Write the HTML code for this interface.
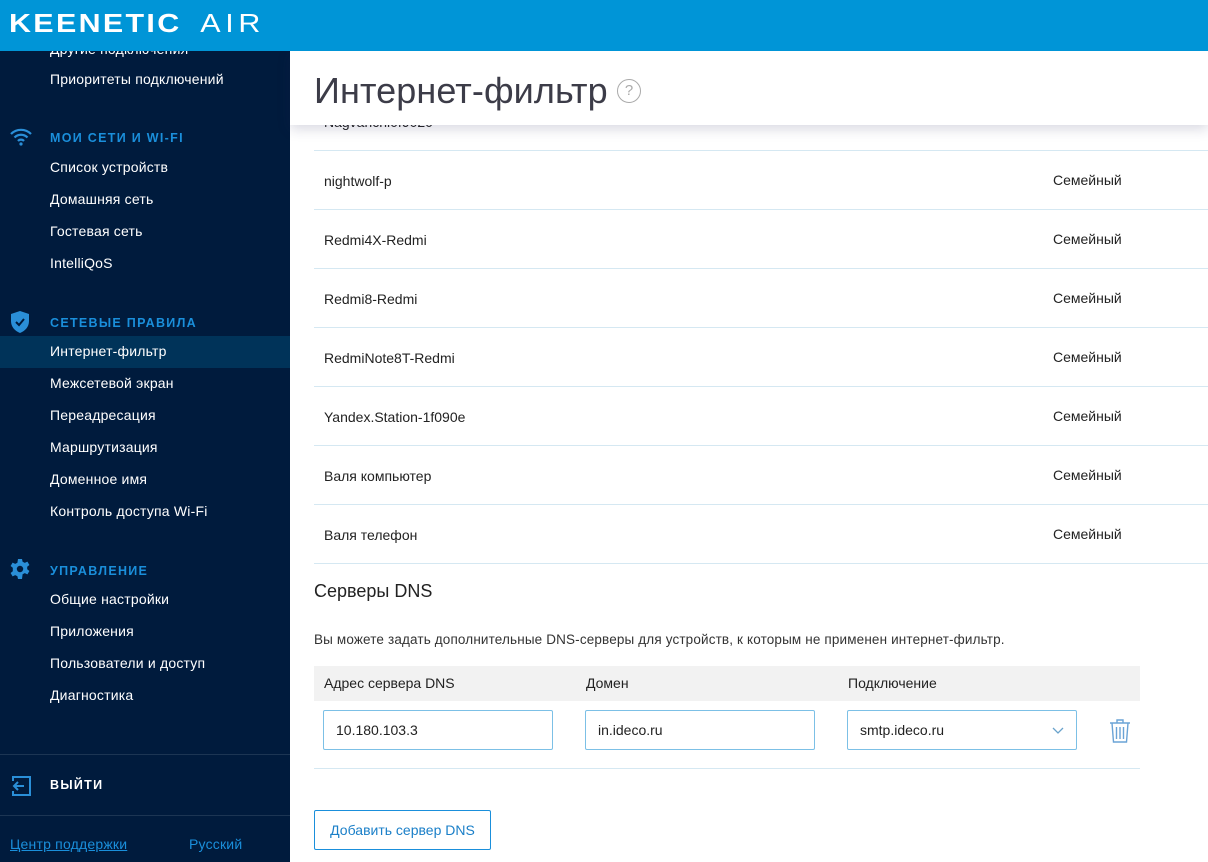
<!DOCTYPE html>
<html><head><meta charset="utf-8"><style>
*{margin:0;padding:0;box-sizing:border-box}
body{width:1208px;height:862px;overflow:hidden;font-family:"Liberation Sans","Noto Sans CJK SC",sans-serif;background:#fff;position:relative;color:#222}
.top{position:absolute;left:0;top:0;width:1208px;height:51px;background:#0095d7;z-index:5}
.logo{position:absolute;left:9px;top:8px;color:#fff;font-size:26px;font-weight:bold;letter-spacing:2px;transform:scaleX(1.17);transform-origin:left}
.logo span{font-weight:normal;letter-spacing:4px;margin-left:16px}
.side{position:absolute;left:0;top:51px;width:290px;height:811px;background:#001b3d;color:#fff;font-size:14px;letter-spacing:0.2px}
.it{position:absolute;left:50px}
.sec{position:absolute;left:50px;color:#1a8fdb;font-weight:bold;font-size:12.5px;letter-spacing:1.3px}
.act{position:absolute;left:0;top:285px;width:290px;height:32px;background:#003359}
.ic{position:absolute;left:10px}
.hdr{position:absolute;left:290px;top:51px;width:918px;height:74px;background:#fff;z-index:3;box-shadow:0 4px 12px rgba(40,40,90,.18)}
.hdr h1{position:absolute;left:24px;top:19px;font-weight:normal;font-size:36px;color:#3c3c48;letter-spacing:0.1px}
.q{position:absolute;left:327px;top:28px;width:24px;height:24px;border:1.5px solid #aaa;border-radius:50%;color:#aaa;font-size:15px;text-align:center;line-height:21px}
.row{position:absolute;left:314px;width:894px;height:59px;border-bottom:1px solid #d5e8f2;font-size:14px}
.row .n{position:absolute;left:10px;top:22px}
.row .v{position:absolute;left:739px;top:21px}
.inp{position:absolute;top:710px;height:40px;border:1px solid #7cc0e6;border-radius:2px;font-size:14px;padding:11px 12px}
</style></head><body>
<div class="top"><div class="logo">KEENETIC<span>AIR</span></div></div>
<div class="side">
<div class="it" style="top:-10px">Другие подключения</div>
<div class="it" style="top:20px">Приоритеты подключений</div>
<svg class="ic" style="top:77px" width="22" height="18" viewBox="0 0 22 18"><path d="M1 6a14 14 0 0 1 20 0M4.5 9.5a9 9 0 0 1 13 0M8 13a4 4 0 0 1 6 0" stroke="#2a8fd8" stroke-width="2.2" fill="none"/><circle cx="11" cy="16" r="1.6" fill="#2a8fd8"/></svg>
<div class="sec" style="top:80px">МОИ СЕТИ И WI-FI</div>
<div class="it" style="top:108px">Список устройств</div>
<div class="it" style="top:140px">Домашняя сеть</div>
<div class="it" style="top:172px">Гостевая сеть</div>
<div class="it" style="top:204px">IntelliQoS</div>
<svg class="ic" style="top:259px" width="20" height="24" viewBox="0 0 20 24"><path d="M10 1L1 4v7c0 6 4 10 9 12 5-2 9-6 9-12V4z" fill="#2a8fd8"/><path d="M6 12l3 3 5-6" stroke="#001b3d" stroke-width="2" fill="none"/></svg>
<div class="sec" style="top:265px">СЕТЕВЫЕ ПРАВИЛА</div>
<div class="act"></div>
<div class="it" style="top:292px">Интернет-фильтр</div>
<div class="it" style="top:324px">Межсетевой экран</div>
<div class="it" style="top:356px">Переадресация</div>
<div class="it" style="top:388px">Маршрутизация</div>
<div class="it" style="top:420px">Доменное имя</div>
<div class="it" style="top:452px">Контроль доступа Wi-Fi</div>
<svg class="ic" style="top:508px" width="20" height="20" viewBox="0 0 20 20"><path d="M8 0h4l.6 2.8 2.2 1.1 2.6-1.3 2 3.4-2.2 1.8v2.4l2.2 1.8-2 3.4-2.6-1.3-2.2 1.1L12 20H8l-.6-2.8-2.2-1.1-2.6 1.3-2-3.4 2.2-1.8V8.8L.6 7 2.6 3.6l2.6 1.3 2.2-1.1z" fill="#2a8fd8"/><circle cx="10" cy="10" r="3.2" fill="#001b3d"/></svg>
<div class="sec" style="top:513px">УПРАВЛЕНИЕ</div>
<div class="it" style="top:540px">Общие настройки</div>
<div class="it" style="top:572px">Приложения</div>
<div class="it" style="top:604px">Пользователи и доступ</div>
<div class="it" style="top:636px">Диагностика</div>
<div style="position:absolute;left:0;top:703px;width:290px;border-top:1px solid #1c3553"></div>
<svg class="ic" style="top:724px" width="22" height="22" viewBox="0 0 22 22"><path d="M3 6V2h17v18H3v-4" stroke="#2a8fd8" stroke-width="2" fill="none"/><path d="M14 11H4M8 7l-4 4 4 4" stroke="#2a8fd8" stroke-width="2" fill="none"/></svg>
<div class="sec" style="top:727px;color:#fff">ВЫЙТИ</div>
<div style="position:absolute;left:0;top:764px;width:290px;border-top:1px solid #1c3553"></div>
<div style="position:absolute;left:10px;top:785px;color:#1a8fdb;text-decoration:underline">Центр поддержки</div>
<div style="position:absolute;left:189px;top:785px;color:#1a8fdb">Русский</div>
</div>
<div class="hdr"><h1>Интернет-фильтр</h1><div class="q">?</div></div>
<div class="row" style="top:92px"><div class="n">Nagvarlchi0f9020</div></div>
<div class="row" style="top:151px"><div class="n">nightwolf-p</div><div class="v">Семейный</div></div>
<div class="row" style="top:210px"><div class="n">Redmi4X-Redmi</div><div class="v">Семейный</div></div>
<div class="row" style="top:269px"><div class="n">Redmi8-Redmi</div><div class="v">Семейный</div></div>
<div class="row" style="top:328px"><div class="n">RedmiNote8T-Redmi</div><div class="v">Семейный</div></div>
<div class="row" style="top:387px"><div class="n">Yandex.Station-1f090e</div><div class="v">Семейный</div></div>
<div class="row" style="top:446px"><div class="n">Валя компьютер</div><div class="v">Семейный</div></div>
<div class="row" style="top:505px"><div class="n">Валя телефон</div><div class="v">Семейный</div></div>
<div style="position:absolute;left:314px;top:581px;font-size:18px">Серверы DNS</div>
<div style="position:absolute;left:314px;top:632px;font-size:13.5px;color:#333;letter-spacing:0.15px">Вы можете задать дополнительные DNS-серверы для устройств, к которым не применен интернет-фильтр.</div>
<div style="position:absolute;left:314px;top:666px;width:826px;height:35px;background:#f2f2f2;font-size:14px">
<span style="position:absolute;left:10px;top:9px">Адрес сервера DNS</span>
<span style="position:absolute;left:272px;top:9px">Домен</span>
<span style="position:absolute;left:534px;top:9px">Подключение</span></div>
<div class="inp" style="left:323px;width:230px">10.180.103.3</div>
<div class="inp" style="left:585px;width:230px">in.ideco.ru</div>
<div class="inp" style="left:847px;width:230px">smtp.ideco.ru<svg style="position:absolute;right:12px;top:16px" width="12" height="8" viewBox="0 0 12 8"><path d="M1 1l5 5 5-5" stroke="#6aa3cc" stroke-width="1.3" fill="none"/></svg></div>
<svg style="position:absolute;left:1109px;top:719px" width="22" height="24" viewBox="0 0 22 24"><path d="M1 4h20M8 4V1h6v3M3 4l1.5 19h13L19 4M7.5 8v12M11 8v12M14.5 8v12" stroke="#6aa3d6" stroke-width="1.4" fill="none"/></svg>
<div style="position:absolute;left:314px;top:768px;width:826px;border-top:1px solid #d5e8f2"></div>
<div style="position:absolute;left:314px;top:810px;width:177px;height:40px;border:1px solid #1a8fdb;border-radius:2px;color:#1a7fc8;font-size:14px;text-align:center;line-height:38px">Добавить сервер DNS</div>
</body></html>
